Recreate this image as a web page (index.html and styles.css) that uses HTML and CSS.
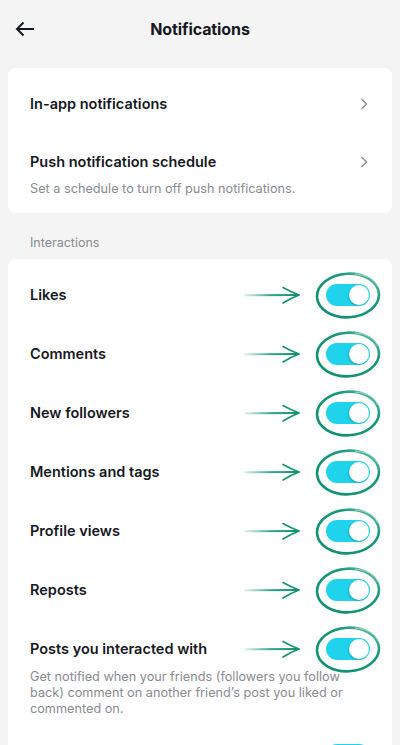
FILE: index.html
```html
<!DOCTYPE html>
<html lang="en">
<head>
  <meta charset="utf-8">
  <title>Notifications</title>
  <meta name="viewport" content="width=device-width, initial-scale=1">
  <link rel="stylesheet" href="styles.css">
</head>
<body>
  <!-- shared marks: the arrow and the ring drawn over each toggle -->
  <svg class="sprite" aria-hidden="true">
    <defs>
      <linearGradient id="arrow-fade" x1="0" y1="0" x2="1" y2="0">
        <stop offset="0" stop-color="#1a9c7e" stop-opacity="0.15"/>
        <stop offset="0.5" stop-color="#1a9c7e" stop-opacity="0.9"/>
        <stop offset="1" stop-color="#12906f"/>
      </linearGradient>
      <linearGradient id="ring-fade" x1="0" y1="1" x2="1" y2="0">
        <stop offset="0" stop-color="#0f8f6e"/>
        <stop offset="0.7" stop-color="#17987a"/>
        <stop offset="1" stop-color="#7cc9b5"/>
      </linearGradient>
      <symbol id="mark-arrow" viewBox="0 0 56 20">
        <path d="M1 10.2 L54 10" stroke="url(#arrow-fade)" stroke-width="2" stroke-linecap="round" fill="none"/>
        <path d="M39 2.5 Q47 7 55 10 Q47 13 39 18" stroke="#14946f" stroke-width="1.6" stroke-linecap="round" fill="none"/>
      </symbol>
      <symbol id="mark-ring" viewBox="0 0 66 48">
        <ellipse cx="33" cy="24.5" rx="31" ry="21.8" transform="rotate(-3 33 24.5)" stroke="url(#ring-fade)" stroke-width="2.6" fill="none"/>
        <path d="M40 3 Q58 4 63 16" stroke="#9fd8c9" stroke-width="1" fill="none"/>
      </symbol>
    </defs>
  </svg>

  <header class="topbar">
    <button class="back" aria-label="Back">
      <svg width="20" height="16" viewBox="0 0 20 16"><path d="M19 8 H2 M8.5 1.5 L2 8 L8.5 14.5" stroke="#161823" stroke-width="2" fill="none"/></svg>
    </button>
    <h1 class="title">Notifications</h1>
  </header>

  <section class="card">
    <div class="row">
      <span class="row-title">In-app notifications</span>
      <svg class="chevron" width="8" height="12" viewBox="0 0 8 12"><path d="M1.5 1 L6.5 6 L1.5 11" stroke="#8a8b91" stroke-width="1.4" fill="none"/></svg>
    </div>
    <div class="row row-sub">
      <div class="row-head">
        <span class="row-title">Push notification schedule</span>
        <svg class="chevron" width="8" height="12" viewBox="0 0 8 12"><path d="M1.5 1 L6.5 6 L1.5 11" stroke="#8a8b91" stroke-width="1.4" fill="none"/></svg>
      </div>
      <p class="row-desc">Set a schedule to turn off push notifications.</p>
    </div>
  </section>

  <div class="section-label">Interactions</div>

  <section class="card card-list">
    <div class="row">
      <span class="row-title">Likes</span>
      <svg class="arrow"><use href="#mark-arrow"/></svg>
      <span class="toggle on"><svg class="ring"><use href="#mark-ring"/></svg></span>
    </div>
    <div class="row">
      <span class="row-title">Comments</span>
      <svg class="arrow"><use href="#mark-arrow"/></svg>
      <span class="toggle on"><svg class="ring"><use href="#mark-ring"/></svg></span>
    </div>
    <div class="row">
      <span class="row-title">New followers</span>
      <svg class="arrow"><use href="#mark-arrow"/></svg>
      <span class="toggle on"><svg class="ring"><use href="#mark-ring"/></svg></span>
    </div>
    <div class="row">
      <span class="row-title">Mentions and tags</span>
      <svg class="arrow"><use href="#mark-arrow"/></svg>
      <span class="toggle on"><svg class="ring"><use href="#mark-ring"/></svg></span>
    </div>
    <div class="row">
      <span class="row-title">Profile views</span>
      <svg class="arrow"><use href="#mark-arrow"/></svg>
      <span class="toggle on"><svg class="ring"><use href="#mark-ring"/></svg></span>
    </div>
    <div class="row">
      <span class="row-title">Reposts</span>
      <svg class="arrow"><use href="#mark-arrow"/></svg>
      <span class="toggle on"><svg class="ring"><use href="#mark-ring"/></svg></span>
    </div>
    <div class="row row-sub row-long">
      <div class="row-head">
        <span class="row-title">Posts you interacted with</span>
        <svg class="arrow"><use href="#mark-arrow"/></svg>
        <span class="toggle on"><svg class="ring"><use href="#mark-ring"/></svg></span>
      </div>
      <p class="row-desc">Get notified when your friends (followers you follow back) comment on another friend’s post you liked or commented on.</p>
    </div>
    <!-- next row only peeks in at the bottom edge -->
    <div class="row">
      <span class="toggle on"></span>
    </div>
  </section>
</body>
</html>
```

FILE: styles.css
```css
body {
  margin: 0;
  padding: 0 8px;
  background-color: #f4f4f4;
  font-family: Inter, "Noto Sans", sans-serif;
  color: #161823;
}

.sprite {
  position: absolute;
  width: 0;
  height: 0;
  overflow: hidden;
}

/* header */
.topbar {
  height: 58px;
  display: flex;
  align-items: center;
  justify-content: center;
  position: relative;
}
.back {
  position: absolute;
  left: 7px;
  top: 21px;
  padding: 0;
  border: none;
  background: none;
  width: 24px;
  height: 16px;
  display: flex;
  align-items: center;
}
.title {
  margin: 0;
  font-size: 16px;
  font-weight: 700;
  letter-spacing: -0.1px;
}

/* cards */
.card {
  margin-top: 10px;
  background-color: #ffffff;
  border-radius: 8px;
  padding: 6px 0;
}
.card-list {
  margin-top: 0;
}
.row {
  box-sizing: border-box;
  min-height: 59px;
  padding: 0 22px;
  display: flex;
  align-items: center;
}
.row-sub {
  display: block;
  padding: 19px 22px 10px;
}
.row-head {
  display: flex;
  align-items: center;
  height: 20px;
}
.row-title {
  font-size: 14.5px;
  font-weight: 600;
  line-height: 20px;
}
.row-desc {
  margin: 9px 0 0;
  font-size: 12.7px;
  line-height: 16px;
  color: #8a8b91;
}
.row-long {
  padding-top: 20px;
  padding-bottom: 8px;
}
.row-long .row-desc {
  margin-top: 10px;
  padding-right: 8px;
}
.chevron {
  margin-left: auto;
  margin-right: 2px;
}

.section-label {
  padding: 22px 22px 8px;
  font-size: 12.5px;
  line-height: 16px;
  color: #8a8b91;
}

/* toggles */
.arrow {
  margin-left: auto;
  margin-right: 26px;
  width: 56px;
  height: 20px;
}
.toggle {
  position: relative;
  flex: none;
  width: 44px;
  height: 22px;
  border-radius: 11px;
  background-color: #1fd3ec;
  margin-left: auto;
}
.arrow + .toggle {
  margin-left: 0;
}
.toggle::after {
  content: "";
  position: absolute;
  top: 1px;
  right: 1px;
  width: 20px;
  height: 20px;
  border-radius: 50%;
  background-color: #ffffff;
  box-shadow: -1px 1px 2px rgba(0, 0, 0, 0.18);
}
.ring {
  position: absolute;
  left: -11px;
  top: -13px;
  width: 66px;
  height: 48px;
  overflow: visible;
}
```
